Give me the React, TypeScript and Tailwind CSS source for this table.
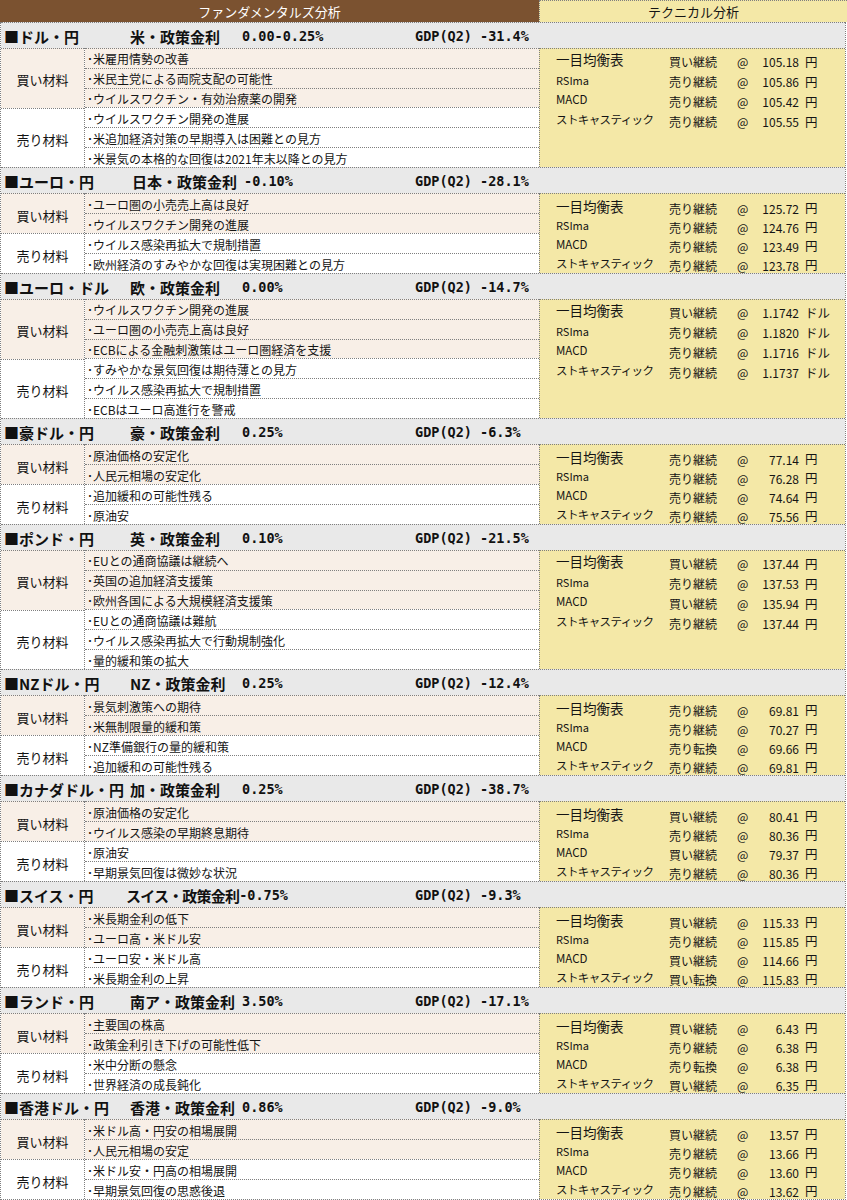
import React from "react";

type Section = {
  name: string;
  policy: string;
  policyClass?: string;
  rate: string;
  gdp: string;
  buy: string[];
  sell: string[];
  unit: string;
  tech: [string, string][];
};

const techNames = ["一目均衡表", "RSIma", "MACD", "ストキャスティック"];
const techNameClass = [
  "text-[13.5px]",
  "text-[11px]",
  "text-[11.5px]",
  "text-[11.5px] tracking-[-0.6px]",
];

const sections: Section[] = [
  {
    name: "■ドル・円",
    policy: "米・政策金利",
    rate: "0.00-0.25%",
    gdp: "GDP(Q2) -31.4%",
    buy: ["米雇用情勢の改善", "米民主党による両院支配の可能性", "ウイルスワクチン・有効治療薬の開発"],
    sell: ["ウイルスワクチン開発の進展", "米追加経済対策の早期導入は困難との見方", "米景気の本格的な回復は2021年末以降との見方"],
    unit: "円",
    tech: [["買い継続", "105.18"], ["売り継続", "105.86"], ["売り継続", "105.42"], ["売り継続", "105.55"]],
  },
  {
    name: "■ユーロ・円",
    policy: "日本・政策金利",
    policyClass: "ml-[2px]",
    rate: "-0.10%",
    gdp: "GDP(Q2) -28.1%",
    buy: ["ユーロ圏の小売売上高は良好", "ウイルスワクチン開発の進展"],
    sell: ["ウイルス感染再拡大で規制措置", "欧州経済のすみやかな回復は実現困難との見方"],
    unit: "円",
    tech: [["売り継続", "125.72"], ["売り継続", "124.76"], ["売り継続", "123.49"], ["売り継続", "123.78"]],
  },
  {
    name: "■ユーロ・ドル",
    policy: "欧・政策金利",
    rate: "0.00%",
    gdp: "GDP(Q2) -14.7%",
    buy: ["ウイルスワクチン開発の進展", "ユーロ圏の小売売上高は良好", "ECBによる金融刺激策はユーロ圏経済を支援"],
    sell: ["すみやかな景気回復は期待薄との見方", "ウイルス感染再拡大で規制措置", "ECBはユーロ高進行を警戒"],
    unit: "ドル",
    tech: [["買い継続", "1.1742"], ["売り継続", "1.1820"], ["売り継続", "1.1716"], ["売り継続", "1.1737"]],
  },
  {
    name: "■豪ドル・円",
    policy: "豪・政策金利",
    rate: "0.25%",
    gdp: "GDP(Q2) -6.3%",
    buy: ["原油価格の安定化", "人民元相場の安定化"],
    sell: ["追加緩和の可能性残る", "原油安"],
    unit: "円",
    tech: [["売り継続", "77.14"], ["売り継続", "76.28"], ["売り継続", "74.64"], ["売り継続", "75.56"]],
  },
  {
    name: "■ポンド・円",
    policy: "英・政策金利",
    rate: "0.10%",
    gdp: "GDP(Q2) -21.5%",
    buy: ["EUとの通商協議は継続へ", "英国の追加経済支援策", "欧州各国による大規模経済支援策"],
    sell: ["EUとの通商協議は難航", "ウイルス感染再拡大で行動規制強化", "量的緩和策の拡大"],
    unit: "円",
    tech: [["買い継続", "137.44"], ["売り継続", "137.53"], ["買い継続", "135.94"], ["売り継続", "137.44"]],
  },
  {
    name: "■NZドル・円",
    policy: "NZ・政策金利",
    rate: "0.25%",
    gdp: "GDP(Q2) -12.4%",
    buy: ["景気刺激策への期待", "米無制限量的緩和策"],
    sell: ["NZ準備銀行の量的緩和策", "追加緩和の可能性残る"],
    unit: "円",
    tech: [["売り継続", "69.81"], ["売り継続", "70.27"], ["売り転換", "69.66"], ["売り継続", "69.81"]],
  },
  {
    name: "■カナダドル・円",
    policy: "加・政策金利",
    rate: "0.25%",
    gdp: "GDP(Q2) -38.7%",
    buy: ["原油価格の安定化", "ウイルス感染の早期終息期待"],
    sell: ["原油安", "早期景気回復は微妙な状況"],
    unit: "円",
    tech: [["買い継続", "80.41"], ["売り継続", "80.36"], ["買い継続", "79.37"], ["売り継続", "80.36"]],
  },
  {
    name: "■スイス・円",
    policy: "スイス・政策金利",
    policyClass: "ml-[-4px] tracking-[-0.8px]",
    rate: "-0.75%",
    gdp: "GDP(Q2) -9.3%",
    buy: ["米長期金利の低下", "ユーロ高・米ドル安"],
    sell: ["ユーロ安・米ドル高", "米長期金利の上昇"],
    unit: "円",
    tech: [["買い継続", "115.33"], ["売り継続", "115.85"], ["買い継続", "114.66"], ["買い転換", "115.83"]],
  },
  {
    name: "■ランド・円",
    policy: "南ア・政策金利",
    rate: "3.50%",
    gdp: "GDP(Q2) -17.1%",
    buy: ["主要国の株高", "政策金利引き下げの可能性低下"],
    sell: ["米中分断の懸念", "世界経済の成長鈍化"],
    unit: "円",
    tech: [["買い継続", "6.43"], ["売り継続", "6.38"], ["売り転換", "6.38"], ["買い継続", "6.35"]],
  },
  {
    name: "■香港ドル・円",
    policy: "香港・政策金利",
    rate: "0.86%",
    gdp: "GDP(Q2) -9.0%",
    buy: ["米ドル高・円安の相場展開", "人民元相場の安定"],
    sell: ["米ドル安・円高の相場展開", "早期景気回復の思惑後退"],
    unit: "円",
    tech: [["買い継続", "13.57"], ["売り継続", "13.66"], ["売り継続", "13.60"], ["売り継続", "13.62"]],
  },
];

const line = "border-dotted border-[#7f7f7f]";

const Pair = ({ s }: { s: Section }) => {
  const tall = s.buy.length > 2;
  return (
    <div>
      {/* section title row */}
      <div className={`grid grid-cols-[129px_285px_1fr] items-center h-[26px] pt-[2px] bg-[#e9e9e9] border-t ${line} font-bold text-[#111]`}>
        <span className="pl-[3px] text-[15px] whitespace-nowrap">{s.name}</span>
        <span className="flex items-center whitespace-nowrap">
          <span className={`min-w-[112px] text-[15px] ${s.policyClass ?? ""}`}>{s.policy}</span>
          <span className="font-['DejaVu_Sans_Mono',monospace] text-[13.5px]">{s.rate}</span>
        </span>
        <span className="font-['DejaVu_Sans_Mono',monospace] text-[13.5px] whitespace-nowrap">{s.gdp}</span>
      </div>

      <div className={`flex ${tall ? "h-[119px]" : "h-[80px]"}`}>
        <div className="w-[538px] flex shrink-0">
          <div className="w-[84px] flex flex-col border-r border-dotted border-[#7f7f7f] text-[13px]">
            <div className={`flex-1 flex items-center justify-center pt-[3px] bg-[#f8efe7] border-t ${line}`}>
              買い材料
            </div>
            <div className={`flex-1 flex items-center justify-center pt-[3px] bg-white border-t ${line}`}>
              売り材料
            </div>
          </div>
          <div className="flex-1 flex flex-col text-[12px]">
            {s.buy.map((t) => (
              <div key={t} className={`flex-1 flex items-center pt-[2px] pl-[2px] bg-[#f8efe7] border-t ${line} whitespace-nowrap`}>
                ･{t}
              </div>
            ))}
            {s.sell.map((t) => (
              <div key={t} className={`flex-1 flex items-center pt-[2px] pl-[2px] bg-white border-t ${line} whitespace-nowrap`}>
                ･{t}
              </div>
            ))}
          </div>
        </div>

        <div className={`flex-1 bg-[#f4e8a7] border-l border-t ${line} overflow-hidden pl-[16px] ${tall ? "pt-[3px]" : "pt-[5px]"}`}>
          {s.tech.map(([sig, price], i) => (
            <div key={i} className={`${tall ? "h-[20px]" : "h-[19px]"} flex items-center text-[12px] whitespace-nowrap`}>
              <span className={`w-[113px] -translate-y-[2px] ${techNameClass[i]}`}>{techNames[i]}</span>
              <span className="w-[68px]">{sig}</span>
              <span className="w-[14px]">@</span>
              <span className="w-[48px] text-right">{price}</span>
              <span className="ml-[6px] text-[12.5px]">{s.unit}</span>
            </div>
          ))}
        </div>
      </div>
    </div>
  );
}

export default function App() {
  return (
    <div className="w-[847px] bg-white text-[#141414] font-['Noto_Sans_CJK_JP',sans-serif] leading-none">
      <div className="flex h-[22px] text-[13px]">
        <div className="w-[539px] bg-[#7b5230] text-white flex items-center justify-center">
          ファンダメンタルズ分析
        </div>
        <div className={`flex-1 bg-[#f4e8a7] flex items-center justify-center border-l border-t ${line}`}>
          テクニカル分析
        </div>
      </div>
      <div className={`w-[846px] border-x border-b ${line}`}>
        {sections.map((s) => (
          <Pair key={s.name} s={s} />
        ))}
      </div>
    </div>
  );
}
